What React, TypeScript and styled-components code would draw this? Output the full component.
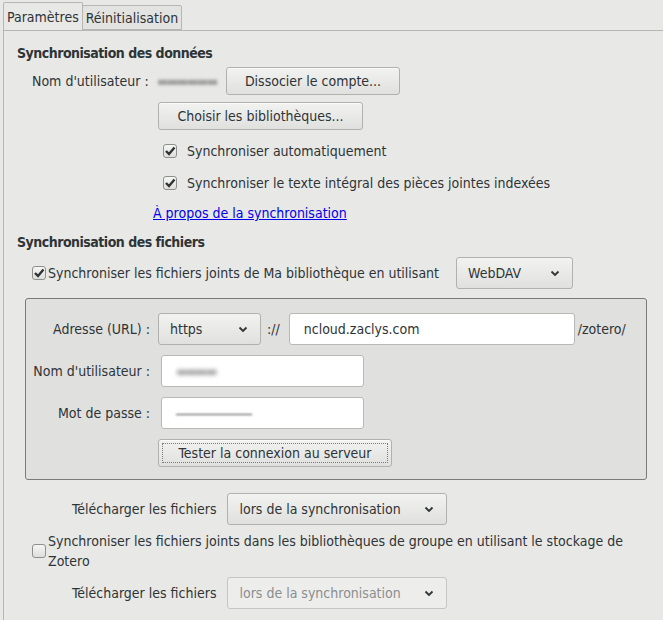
import React from 'react';
import styled, { createGlobalStyle } from 'styled-components';

const GlobalStyle = createGlobalStyle`
  html, body {
    margin: 0;
    padding: 0;
    background: #e8e8e7;
  }
  body {
    font-family: "DejaVu Sans Condensed", "DejaVu Sans", sans-serif;
    font-size: 14px;
    color: #2e3436;
  }
`;

const Window = styled.div`
  width: 663px;
  height: 620px;
  overflow: hidden;
  padding: 3px 0 0 3px;
  box-sizing: border-box;
`;

const TabBar = styled.div`
  display: flex;
  align-items: flex-end;
  height: 27px;
`;

const Tab = styled.div<{ $active?: boolean }>`
  height: ${(p) => (p.$active ? '28px' : '25px')};
  padding: 0 3px;
  box-sizing: border-box;
  display: flex;
  align-items: center;
  border: 1px solid #b6b6b3;
  border-bottom: ${(p) => (p.$active ? 'none' : '1px solid #b6b6b3')};
  border-radius: 2px 2px 0 0;
  background: ${(p) => (p.$active ? '#e8e8e7' : '#e3e3e2')};
  position: relative;
  z-index: ${(p) => (p.$active ? 2 : 1)};
  margin-left: ${(p) => (p.$active ? '0' : '-1px')};
`;

const Panel = styled.div`
  border-top: 1px solid #b6b6b3;
  border-left: 1px solid #b6b6b3;
  padding: 12px 0 0 13px;
  height: 600px;
  box-sizing: border-box;
`;

const Heading = styled.div`
  font-weight: bold;
  height: 20px;
  line-height: 20px;
  letter-spacing: -0.5px;
`;

const Row = styled.div<{ $indent?: number; $height?: number; $gap?: number; $top?: number }>`
  display: flex;
  align-items: center;
  height: ${(p) => p.$height ?? 32}px;
  padding-left: ${(p) => p.$indent ?? 0}px;
  gap: ${(p) => p.$gap ?? 0}px;
  margin-top: ${(p) => p.$top ?? 0}px;
`;

const Label = styled.span<{ $width?: number }>`
  white-space: nowrap;
  ${(p) => (p.$width ? `width: ${p.$width}px;` : '')}
`;

const Blurred = styled.span<{ $width: number; $tone: string; $blur: number; $size?: number }>`
  display: inline-block;
  width: ${(p) => p.$width}px;
  color: ${(p) => p.$tone};
  filter: blur(${(p) => p.$blur}px);
  font-size: ${(p) => p.$size ?? 14}px;
  white-space: nowrap;
  overflow: hidden;
  letter-spacing: -2px;
`;

const Button = styled.button<{ $width: number; $height?: number; $focused?: boolean }>`
  font: inherit;
  color: #2e3436;
  width: ${(p) => p.$width}px;
  height: ${(p) => p.$height ?? 28}px;
  border: 1px solid #b1b1ae;
  border-radius: 3px;
  background: linear-gradient(#f2f2f1, #e0e0de);
  box-shadow: inset 0 1px rgba(255, 255, 255, 0.6);
  padding: 0;
  position: relative;
  ${(p) =>
    p.$focused
      ? `&::after {
          content: '';
          position: absolute;
          inset: 3px;
          border: 1px dotted #7a7a78;
        }`
      : ''}
`;

const Select = styled.div<{ $width: number; $disabled?: boolean }>`
  display: flex;
  align-items: center;
  justify-content: space-between;
  box-sizing: border-box;
  width: ${(p) => p.$width}px;
  height: 32px;
  padding: 0 12px 0 11px;
  border: 1px solid ${(p) => (p.$disabled ? '#c6c6c3' : '#b1b1ae')};
  border-radius: 3px;
  background: ${(p) => (p.$disabled ? '#ededec' : 'linear-gradient(#f2f2f1, #e0e0de)')};
  color: ${(p) => (p.$disabled ? '#8b8e8f' : '#2e3436')};
`;

const Chevron = () => (
  <svg width="10" height="7" viewBox="0 0 10 7">
    <path d="M1.5 1.5 L5 5 L8.5 1.5" fill="none" stroke="#2e3436" strokeWidth="1.8" />
  </svg>
);

const Box = styled.span`
  width: 14px;
  height: 14px;
  box-sizing: border-box;
  border: 1px solid #8f8f8c;
  border-radius: 3px;
  background: linear-gradient(#f6f6f5, #dededc);
  display: inline-flex;
  align-items: center;
  justify-content: center;
  flex-shrink: 0;
`;

const Check = ({ checked }: { checked?: boolean }) => (
  <Box>
    {checked && (
      <svg width="12" height="12" viewBox="0 0 12 12">
        <path d="M2 6 L5 9 L10.5 2.5" fill="none" stroke="#2e3436" strokeWidth="2.4" />
      </svg>
    )}
  </Box>
);

const Link = styled.a`
  color: #0000ee;
  text-decoration: underline;
`;

const Fieldset = styled.div`
  margin: 9px 0 0 8px;
  width: 622px;
  height: 182px;
  box-sizing: border-box;
  border: 1px solid #7b7b79;
  border-radius: 3px;
  background: #e0e0df;
  padding: 14px 0 0 7px;
  display: grid;
  grid-template-columns: 117px auto;
  grid-template-rows: 32px 32px 32px 28px;
  column-gap: 8px;
  row-gap: 10px;
  align-items: center;
`;

const FieldLabel = styled.span`
  text-align: right;
  white-space: nowrap;
`;

const Controls = styled.div<{ $inset?: number }>`
  display: flex;
  align-items: center;
  padding-left: ${(p) => p.$inset ?? 0}px;
`;

const Input = styled.div<{ $width: number }>`
  width: ${(p) => p.$width}px;
  height: 32px;
  box-sizing: border-box;
  background: #ffffff;
  border: 1px solid #b8b8b5;
  border-radius: 3px;
  display: flex;
  align-items: center;
  padding-left: 14px;
`;

const Separator = styled.span<{ $left: number; $right: number }>`
  white-space: nowrap;
  margin: 0 ${(p) => p.$right}px 0 ${(p) => p.$left}px;
`;

const GroupRow = styled.div`
  display: flex;
  align-items: center;
  margin: 6px 0 0 15px;
  line-height: 20px;
  width: 630px;
`;

const GroupText = styled.span`
  margin-left: 2px;
`;

export default function App() {
  return (
    <>
      <GlobalStyle />
      <Window>
        <TabBar>
          <Tab $active>Paramètres</Tab>
          <Tab>Réinitialisation</Tab>
        </TabBar>
        <Panel>
          <Heading>Synchronisation des données</Heading>
          <Row $indent={15} $top={2}>
            <Label $width={125}>Nom d'utilisateur :</Label>
            <Blurred $width={69} $tone="#a0a09f" $blur={1.6} $size={14}>
              ▬▬▬▬▬▬
            </Blurred>
            <Button $width={174}>Dissocier le compte...</Button>
          </Row>
          <Row $indent={141} $height={38}>
            <Button $width={205} $height={28}>Choisir les bibliothèques...</Button>
          </Row>
          <Row $indent={146} $gap={10}>
            <Check checked />
            <span>Synchroniser automatiquement</span>
          </Row>
          <Row $indent={146} $gap={10}>
            <Check checked />
            <span>Synchroniser le texte intégral des pièces jointes indexées</span>
          </Row>
          <Row $indent={136} $height={28}>
            <Link href="#">À propos de la synchronisation</Link>
          </Row>
          <Row $height={30}>
            <Heading>Synchronisation des fichiers</Heading>
          </Row>
          <Row $indent={15} $gap={2}>
            <Check checked />
            <Label>Synchroniser les fichiers joints de Ma bibliothèque en utilisant</Label>
            <Separator $left={0} $right={13} />
            <Select $width={117}>
              WebDAV <Chevron />
            </Select>
          </Row>
          <Fieldset>
            <FieldLabel>Adresse (URL) :</FieldLabel>
            <Controls>
              <Select $width={103}>
                https <Chevron />
              </Select>
              <Separator $left={6} $right={9}>://</Separator>
              <Input $width={286}>ncloud.zaclys.com</Input>
              <Separator $left={3} $right={0}>/zotero/</Separator>
            </Controls>
            <FieldLabel>Nom d'utilisateur :</FieldLabel>
            <Controls $inset={3}>
              <Input $width={203}>
                <Blurred $width={48} $tone="#a4a4a4" $blur={2} $size={14}>
                  ▬▬▬▬
                </Blurred>
              </Input>
            </Controls>
            <FieldLabel>Mot de passe :</FieldLabel>
            <Controls $inset={3}>
              <Input $width={203}>
                <Blurred $width={90} $tone="#3c3c3c" $blur={1.2} $size={14}>
                  ―――――――
                </Blurred>
              </Input>
            </Controls>
            <span />
            <Controls>
              <Button $width={234} $height={28} $focused>
                Tester la connexion au serveur
              </Button>
            </Controls>
          </Fieldset>
          <Row $indent={55} $top={13} $gap={11}>
            <Label>Télécharger les fichiers</Label>
            <Select $width={220}>
              lors de la synchronisation <Chevron />
            </Select>
          </Row>
          <GroupRow>
            <Check />
            <GroupText>
              Synchroniser les fichiers joints dans les bibliothèques de groupe en utilisant le stockage de Zotero
            </GroupText>
          </GroupRow>
          <Row $indent={55} $top={6} $gap={11}>
            <Label>Télécharger les fichiers</Label>
            <Select $width={220} $disabled>
              lors de la synchronisation <Chevron />
            </Select>
          </Row>
        </Panel>
      </Window>
    </>
  );
}
